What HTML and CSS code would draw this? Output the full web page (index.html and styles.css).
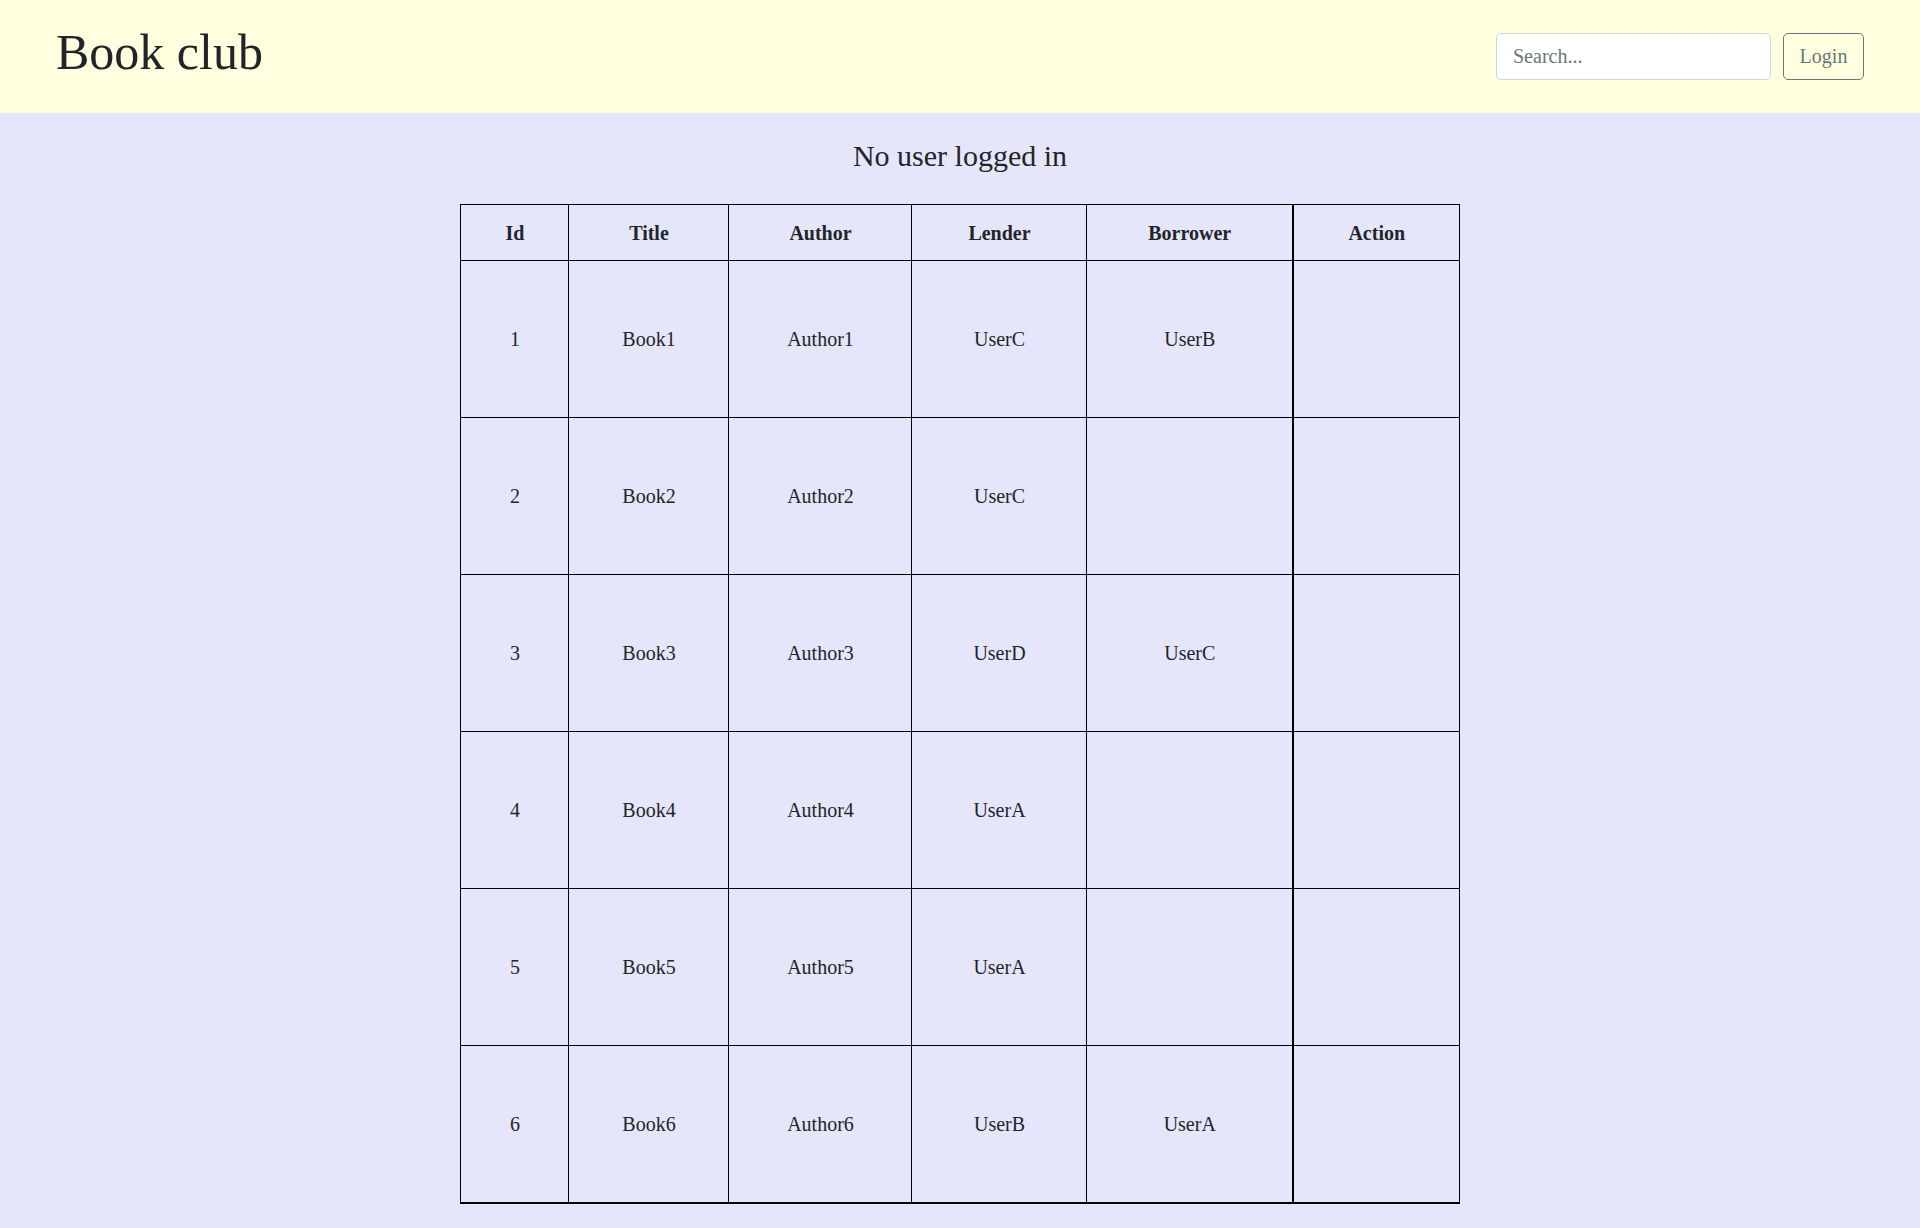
FILE: index.html
```html
<!DOCTYPE html>
<html lang="en">
<head>
<meta charset="utf-8">
<title>Book club</title>
<link rel="stylesheet" href="styles.css">
</head>
<body>
<header class="topbar">
  <h1 class="brand">Book club</h1>
  <div class="tools">
    <input class="search" type="text" placeholder="Search...">
    <button class="login" type="button">Login</button>
  </div>
</header>
<main class="content">
  <h3 class="status">No user logged in</h3>
  <table class="books">
    <colgroup>
      <col class="c-id"><col class="c-title"><col class="c-author"><col class="c-lender"><col class="c-borrower"><col class="c-action">
    </colgroup>
    <thead>
      <tr><th>Id</th><th>Title</th><th>Author</th><th>Lender</th><th>Borrower</th><th class="act">Action</th></tr>
    </thead>
    <tbody>
      <tr><td>1</td><td>Book1</td><td>Author1</td><td>UserC</td><td>UserB</td><td class="act"></td></tr>
      <tr><td>2</td><td>Book2</td><td>Author2</td><td>UserC</td><td></td><td class="act"></td></tr>
      <tr><td>3</td><td>Book3</td><td>Author3</td><td>UserD</td><td>UserC</td><td class="act"></td></tr>
      <tr><td>4</td><td>Book4</td><td>Author4</td><td>UserA</td><td></td><td class="act"></td></tr>
      <tr><td>5</td><td>Book5</td><td>Author5</td><td>UserA</td><td></td><td class="act"></td></tr>
      <tr class="last"><td>6</td><td>Book6</td><td>Author6</td><td>UserB</td><td>UserA</td><td class="act"></td></tr>
    </tbody>
  </table>
</main>
</body>
</html>
```
FILE: styles.css
```css
html, body {
  margin: 0;
  padding: 0;
}
body {
  background: #e6e6fa;
  color: #212529;
  font-family: "Liberation Serif", "Times New Roman", serif;
  font-size: 20px;
  line-height: 1.15;
}
.topbar {
  height: 113px;
  box-sizing: border-box;
  background: #ffffe0;
  padding: 0 56px;
  display: flex;
  align-items: center;
  justify-content: space-between;
}
.brand {
  margin: 0 0 10px 0;
  font-size: 50px;
  font-weight: 400;
  line-height: 60px;
}
.tools {
  display: flex;
  align-items: center;
  gap: 12px;
}
.search {
  box-sizing: border-box;
  width: 275px;
  height: 47px;
  padding: 0 16px;
  border: 1px solid #ced4da;
  border-radius: 5px;
  background: #fff;
  font-family: "Liberation Serif", "Times New Roman", serif;
  font-size: 20px;
  color: #212529;
  outline: none;
}
.search::placeholder {
  color: #6c757d;
}
.login {
  box-sizing: border-box;
  height: 47px;
  width: 81px;
  padding: 0;
  border: 1px solid #6c757d;
  border-radius: 5px;
  background: transparent;
  color: #6c757d;
  font-family: "Liberation Serif", "Times New Roman", serif;
  font-size: 20px;
}
.content {
  padding-top: 25px;
}
.status {
  margin: 0 0 30px 0;
  text-align: center;
  font-size: 30px;
  font-weight: 400;
  line-height: 36px;
}
.books {
  width: 999px;
  margin: 0 auto;
  border-collapse: collapse;
  table-layout: fixed;
}
.c-id { width: 108px; }
.c-title { width: 160px; }
.c-author { width: 183px; }
.c-lender { width: 175px; }
.c-borrower { width: 206px; }
.c-action { width: 167px; }
.books th,
.books td {
  border: 1px solid #000;
  text-align: center;
  vertical-align: middle;
}
.books th {
  padding: 17px 7px 15px 8px;
  font-weight: 700;
  line-height: 23px;
}
.books td {
  padding: 0 7px 0 8px;
  height: 156px;
}
.books .act {
  border-left: 2px solid #000;
}
.books tr.last td {
  border-bottom: 2px solid #000;
}
```
